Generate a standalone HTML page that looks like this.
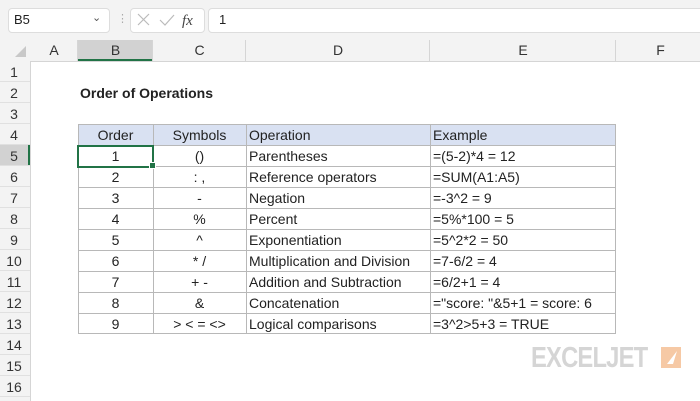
<!DOCTYPE html>
<html><head><style>
body{margin:0;width:700px;height:400px;overflow:hidden;background:#fff;font-family:"Liberation Sans",Arial,sans-serif;position:relative}
.a{position:absolute}
.t{position:absolute;font-size:14px;line-height:21px;color:#222;white-space:nowrap}
.c{padding-top:1px}
</style></head><body>
<div class="a" style="left:0;top:0;width:700px;height:40px;background:#f3f3f3"></div>
<div class="a" style="left:8px;top:8px;width:100px;height:23px;background:#fff;border:1px solid #ddd;border-radius:4px"></div>
<div class="t" style="left:14px;top:9px;font-size:13px">B5</div>
<div class="t" style="left:92px;top:8px;font-size:11px;color:#555">&#8964;</div>
<div class="t" style="left:117px;top:9px;font-size:11px;color:#aaa">&#8942;</div>
<div class="a" style="left:130px;top:8px;width:73px;height:23px;background:#fff;border:1px solid #ddd;border-radius:4px"></div>
<svg class="a" style="left:136px;top:12px" width="60" height="16"><path d="M2 2L13 13M13 2L2 13" stroke="#bbb" stroke-width="1.2"/><path d="M24 8L29 13L38 3" stroke="#bbb" stroke-width="1.2" fill="none"/><text x="46" y="13" font-family="Liberation Serif" font-style="italic" font-size="15" fill="#444">fx</text></svg>
<div class="a" style="left:208px;top:8px;width:500px;height:23px;background:#fff;border:1px solid #ddd;border-radius:4px"></div>
<div class="t" style="left:219px;top:9px;font-size:13px">1</div>
<div class="a" style="left:0;top:40px;width:700px;height:21px;background:#f3f3f3;border-bottom:1px solid #d5d5d5"></div>
<div class="a" style="left:78px;top:40px;width:75px;height:19px;background:#d2d2d2;border-bottom:2px solid #217346"></div>
<svg class="a" style="left:14px;top:45px" width="14" height="14"><path d="M12 1L12 12L1 12Z" fill="#c8c8c8"/></svg>
<div class="a" style="left:0;top:61px;width:30px;height:340px;background:#f3f3f3;border-right:1px solid #d5d5d5"></div>
<div class="a" style="left:0;top:145px;width:28px;height:21px;background:#d2d2d2;border-right:2px solid #217346"></div>
<div class="a" style="left:78px;top:124px;width:538px;height:21px;background:#d9e1f2"></div>
<div id="g"></div>
<div class="t c" style="left:80px;top:82px;font-weight:bold">Order of Operations</div>
<div class="a" style="left:77px;top:145px;width:73px;height:19px;border:2px solid #217346"></div>
<div class="a" style="left:149px;top:162px;width:5px;height:5px;background:#217346;border:1px solid #fff"></div>
<div class="t" style="left:531px;top:338px;font-size:29px;line-height:40px;font-weight:bold;color:#d5d5d5;letter-spacing:-1px;transform:scaleX(0.82);transform-origin:0 0">EXCELJET</div>
<div class="a" style="left:661px;top:347px;width:20px;height:21px;background:#f6c9a5"></div>
<svg class="a" style="left:661px;top:347px" width="20" height="21"><path d="M16 4L6 17L12 17Z" fill="#fff"/></svg>
<script>
var cols=[[30,78,'A'],[78,153,'B'],[153,246,'C'],[246,430,'D'],[430,616,'E'],[616,705,'F']];
var h='';
cols.forEach(c=>{h+='<div class="t" style="left:'+c[0]+'px;top:40px;width:'+(c[1]-c[0])+'px;text-align:center;color:#333">'+c[2]+'</div><div class="a" style="left:'+(c[1]-1)+'px;top:40px;width:1px;height:21px;background:#d5d5d5"></div>';});
for(var i=1;i<=16;i++){h+='<div class="t c" style="left:0;top:'+(61+(i-1)*21)+'px;width:28px;text-align:center;color:#333">'+i+'</div><div class="a" style="left:0;top:'+(81+(i-1)*21)+'px;width:30px;height:1px;background:#e0e0e0"></div>';}
var rows=[['Order','Symbols','Operation','Example'],['1','()','Parentheses','=(5-2)*4 = 12'],['2',': ,','Reference operators','=SUM(A1:A5)'],['3','-','Negation','=-3^2 = 9'],['4','%','Percent','=5%*100 = 5'],['5','^','Exponentiation','=5^2*2 = 50'],['6','* /','Multiplication and Division','=7-6/2 = 4'],['7','+ -','Addition and Subtraction','=6/2+1 = 4'],['8','&amp;','Concatenation','="score: "&amp;5+1 = score: 6'],['9','&gt; &lt; = &lt;&gt;','Logical comparisons','=3^2&gt;5+3 = TRUE']];
rows.forEach((r,i)=>{var y=124+i*21;
h+='<div class="t c" style="left:78px;top:'+y+'px;width:75px;text-align:center">'+r[0]+'</div>';
h+='<div class="t c" style="left:153px;top:'+y+'px;width:93px;text-align:center">'+r[1]+'</div>';
h+='<div class="t c" style="left:249px;top:'+y+'px">'+r[2]+'</div>';
h+='<div class="t c" style="left:433px;top:'+y+'px">'+r[3]+'</div>';
h+='<div class="a" style="left:78px;top:'+y+'px;width:538px;height:1px;background:#b8b8b8"></div>';});
h+='<div class="a" style="left:78px;top:333px;width:538px;height:1px;background:#b8b8b8"></div>';
[78,153,246,430,615].forEach(x=>{h+='<div class="a" style="left:'+x+'px;top:124px;width:1px;height:210px;background:#b8b8b8"></div>';});
document.getElementById('g').innerHTML=h;
</script>
</body></html>
